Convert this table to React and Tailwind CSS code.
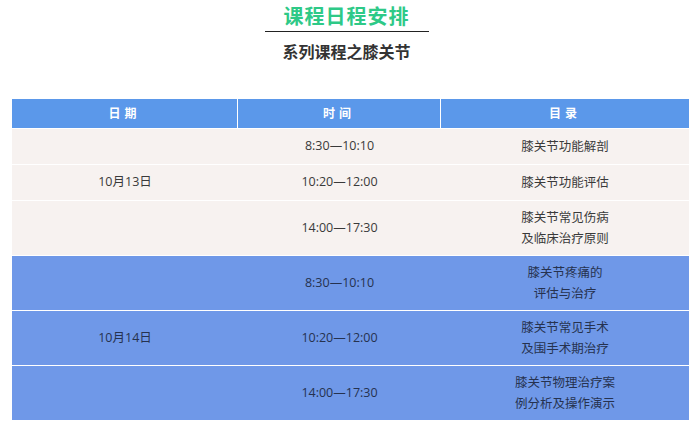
const rows = [
  { date: '', time: '8:30—10:10', topic: ['膝关节功能解剖'], h: 'h-[36px]', tone: 'pale' },
  { date: '10月13日', time: '10:20—12:00', topic: ['膝关节功能评估'], h: 'h-[36px]', tone: 'pale' },
  { date: '', time: '14:00—17:30', topic: ['膝关节常见伤病', '及临床治疗原则'], h: 'h-[55px]', tone: 'pale' },
  { date: '', time: '8:30—10:10', topic: ['膝关节疼痛的', '评估与治疗'], h: 'h-[55px]', tone: 'blue' },
  { date: '10月14日', time: '10:20—12:00', topic: ['膝关节常见手术', '及围手术期治疗'], h: 'h-[55px]', tone: 'blue' },
  { date: '', time: '14:00—17:30', topic: ['膝关节物理治疗案', '例分析及操作演示'], h: 'h-[55px]', tone: 'blue' },
];

export default function App() {
  return (
    <div
      className="w-[693px] h-[430px] bg-white overflow-hidden"
      style={{ fontFamily: '"Noto Sans CJK SC", "Noto Sans", sans-serif' }}>
      <div className="flex flex-col items-center pt-[3px]">
        <h1 className="text-[20px] leading-[26px] font-bold text-[#2ec987] tracking-[1px]">
          课程日程安排
        </h1>
        <div className="w-[164px] h-[1px] bg-[#222] mt-[2px]" />
        <h2 className="mt-[8px] text-[16px] leading-[22px] font-bold text-[#333]">
          系列课程之膝关节
        </h2>
      </div>

      <div
        className="mt-[37px] ml-[12px] mr-[4px] text-[12.5px]"
        style={{ fontFamily: '"Open Sans", "Noto Sans CJK SC", sans-serif' }}>
        <div className="flex h-[29px] bg-[#5b98ea] text-white font-bold text-[12px]">
          <div className="w-[226px] flex items-center justify-center tracking-[4px] border-r border-white">日期</div>
          <div className="w-[203px] flex items-center justify-center tracking-[4px] border-r border-white">时间</div>
          <div className="flex-1 flex items-center justify-center tracking-[4px]">目录</div>
        </div>

        {rows.map((r, i) => (
          <div
            key={i}
            className={
              'flex border-t border-white ' +
              r.h +
              (r.tone === 'pale' ? ' bg-[#f7f2f0] text-[#3a3a3a]' : ' bg-[#6f98e8] text-[#26324f]')
            }>
            <div className="w-[226px] flex items-center justify-center">{r.date}</div>
            <div className="w-[203px] flex items-center justify-center">{r.time}</div>
            <div className="flex-1 flex flex-col items-center justify-center leading-[21px]">
              {r.topic.map((t) => (
                <span key={t}>{t}</span>
              ))}
            </div>
          </div>
        ))}
      </div>
    </div>
  );
}
